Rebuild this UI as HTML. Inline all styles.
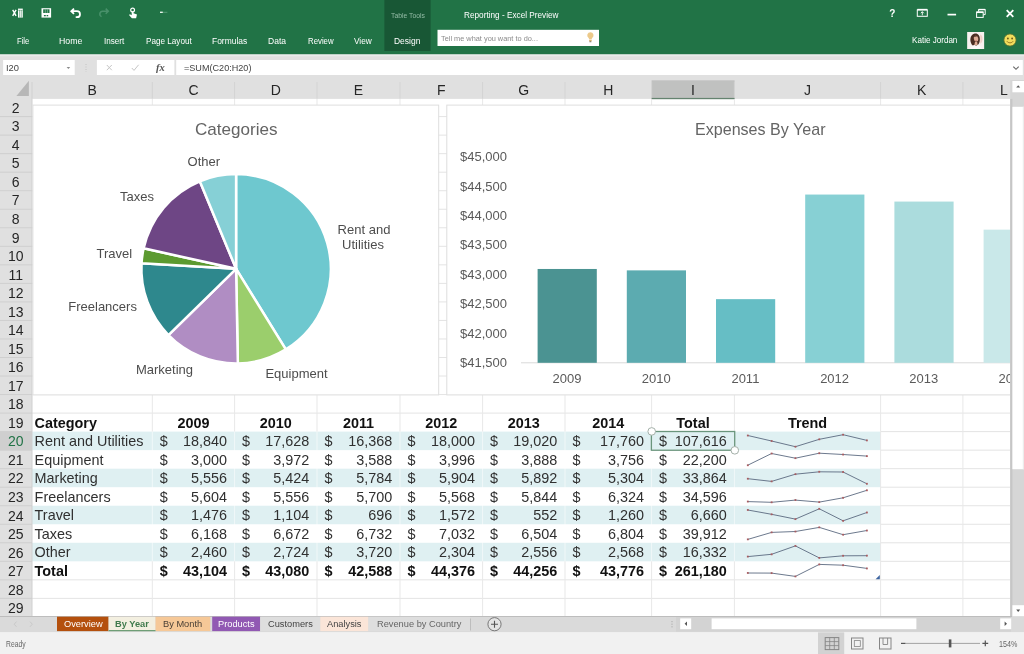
<!DOCTYPE html>
<html lang="en"><head><meta charset="utf-8"><title>Reporting - Excel Preview</title>
<style>
html,body{margin:0;padding:0;background:#fff;width:1024px;height:654px;overflow:hidden;}
body{width:1024px;height:654px;overflow:hidden;position:relative;font-family:"Liberation Sans",sans-serif;}
#app{position:absolute;left:0;top:0;width:1024px;height:654px;overflow:hidden;}
#app div,#app span,#app svg{position:absolute;}
#app>div{left:0;top:0;width:1024px;height:654px;}
#app span{white-space:pre;display:block;}
#app>div{will-change:transform;}
#app svg{overflow:visible;}
</style></head><body><div id="app">
<div id="ribbon">
<svg style="left:0;top:0" width="1024" height="654" viewBox="0 0 1024 654"><rect x="-6.00" y="-6.00" width="1036.00" height="60.60" fill="#217346"/><rect x="384.40" y="-6.00" width="46.20" height="57.00" fill="#185735"/></svg>
<svg style="left:0;top:0" width="200" height="28" viewBox="0 0 200 28">
<g fill="none" stroke="#fff" stroke-width="1.2">
<path d="M12.700 9.800l3.400 6M16.100 9.800l-3.400 6" stroke-width="1.4"/>
<rect x="18" y="8.600" width="4.800" height="9" fill="#fff" stroke="none"/>
<path d="M19.600 10v7.600M21.300 10v7.600" stroke="#217346" stroke-width="0.6" opacity="0.8"/><path d="M18 10.300h4.800" stroke="#217346" stroke-width="0.5" opacity="0.7"/>
<rect x="41.500" y="8.200" width="9.600" height="9.400" fill="#fff" stroke="none"/>
<rect x="43.200" y="9.300" width="6.300" height="3.700" fill="#217346" stroke="none"/>
<path d="M45.300 9.300v3.700M47.400 9.300v3.700" stroke="#9fcdb2" stroke-width="0.6"/>
<rect x="43.900" y="15" width="1.900" height="1.300" fill="#217346" stroke="none"/>
<rect x="46.600" y="15" width="1.600" height="1.300" fill="#217346" stroke="none"/>
<path d="M74 8.600l-2.700 2.600 2.700 2.600M71.600 11.200h5.400a3 3 0 0 1 0 6h-1.300" stroke-width="1.800"/>
<path d="M105.700 8.600l2.600 2.600-2.600 2.600M108 11.200h-5.400a2.800 2.800 0 0 0 -1 5.400" stroke="#48906a" stroke-width="1.500"/>
<circle cx="132.600" cy="10" r="1.900" stroke-width="1.200"/>
<path d="M131.700 11.400v3.800l-1.800-1-.9.900 2.900 3.100h4.200l.9-3.700-3.500-1.200v-1.900z" fill="#fff" stroke="none"/>
<path d="M160 12.300h2.800" stroke-width="1.400" stroke="#e6f3ea"/><path d="M163 12.300h4.400" stroke-width="0.8" stroke="#5fa17d"/>
</g></svg>
<span style="left:16.90px;top:34.76px;font-size:9.6px;line-height:12.48px;color:#fff;transform:scaleX(0.7951);transform-origin:0 50%;">File</span>
<span style="left:58.90px;top:34.76px;font-size:9.6px;line-height:12.48px;color:#fff;transform:scaleX(0.9138);transform-origin:0 50%;">Home</span>
<span style="left:103.90px;top:34.76px;font-size:9.6px;line-height:12.48px;color:#fff;transform:scaleX(0.8455);transform-origin:0 50%;">Insert</span>
<span style="left:145.50px;top:34.76px;font-size:9.6px;line-height:12.48px;color:#fff;transform:scaleX(0.8495);transform-origin:0 50%;">Page Layout</span>
<span style="left:212.30px;top:34.76px;font-size:9.6px;line-height:12.48px;color:#fff;transform:scaleX(0.8798);transform-origin:0 50%;">Formulas</span>
<span style="left:268.40px;top:34.76px;font-size:9.6px;line-height:12.48px;color:#fff;transform:scaleX(0.8876);transform-origin:0 50%;">Data</span>
<span style="left:307.50px;top:34.76px;font-size:9.6px;line-height:12.48px;color:#fff;transform:scaleX(0.8133);transform-origin:0 50%;">Review</span>
<span style="left:354.40px;top:34.76px;font-size:9.6px;line-height:12.48px;color:#fff;transform:scaleX(0.8626);transform-origin:0 50%;">View</span>
<span style="left:394.20px;top:34.76px;font-size:9.6px;line-height:12.48px;color:#fff;transform:scaleX(0.8834);transform-origin:0 50%;">Design</span>
<span style="left:391.00px;top:11.61px;font-size:6.6px;line-height:8.58px;color:#93bba5;transform:scaleX(1.0334);transform-origin:0 50%;">Table Tools</span>
<span style="left:464.20px;top:8.76px;font-size:9.6px;line-height:12.48px;color:#fff;transform:scaleX(0.8565);transform-origin:0 50%;">Reporting - Excel Preview</span>
<svg style="left:0;top:0" width="1024" height="654" viewBox="0 0 1024 654"><rect x="437.50" y="29.80" width="161.50" height="16.20" fill="#fff"/></svg>
<span style="left:441.30px;top:33.53px;font-size:7.8px;line-height:10.14px;color:#8a8a8a;transform:scaleX(0.9440);transform-origin:0 50%;">Tell me what you want to do...</span>
<svg style="left:584px;top:30px" width="14" height="16" viewBox="0 0 14 16">
<path d="M6.4 2.2a3.1 3.1 0 0 0-2 5.5c.5.5.7 1 .7 1.6h2.6c0-.6.2-1.1.7-1.6a3.1 3.1 0 0 0-2-5.5z" fill="#ecc98a"/>
<rect x="5.1" y="9.8" width="2.6" height="1.1" fill="#d8a95c"/><rect x="5.4" y="11.3" width="2" height="0.9" fill="#6b5a3a"/></svg>
<span style="left:889.25px;top:6.80px;font-size:10px;line-height:13.0px;color:#fff;font-weight:bold;">?</span>
<svg style="left:910px;top:4px" width="114" height="20" viewBox="0 0 114 20">
<g fill="none" stroke="#fff" stroke-width="1">
<rect x="7.300" y="5.900" width="10" height="6.400"/><path d="M7.300 5.600h10" stroke-width="1.500"/>
<path d="M12.300 11.300v-3.600M10.800 9.200l1.500-1.500 1.500 1.500" stroke-width="0.9"/>
<path d="M37.5 10.6h8.6" stroke-width="1.7"/>
<rect x="66.6" y="8" width="6.6" height="5.4" /><path d="M66.6 8.3h6.6" stroke-width="1.5"/>
<path d="M68.6 7.6v-2.2h6.6v5.2h-1.8" /><path d="M68.6 5.6h6.6" stroke-width="1.3"/>
<path d="M96.7 6.2l6.6 6.6M103.300 6.2l-6.6 6.6" stroke-width="1.8"/>
</g></svg>
<span style="left:911.70px;top:33.96px;font-size:9.6px;line-height:12.48px;color:#fff;transform:scaleX(0.8422);transform-origin:0 50%;">Katie Jordan</span>
<svg style="left:967px;top:31.7px" width="17.300" height="17" viewBox="0 0 18 18">
<rect width="18" height="18" fill="#f7f1ef"/>
<path d="M13.800 2.500c1.600.6 2.600 2.600 2.400 5.500-.2 2.400-1 3.600-2.200 4.400z" fill="#efcfc6"/>
<path d="M3.900 11.200C2.600 7.300 4 2.400 8 1.700c3.500-.5 5.600 2.200 5.500 6.300-.1 3-1.200 5.400-2.900 6.300H5.900c-1-.8-1.600-1.800-2-3.100z" fill="#4b2e22"/>
<ellipse cx="9.400" cy="7" rx="2.300" ry="3.200" fill="#deae98" transform="rotate(-10 9.400 7)"/>
<path d="M7 5.600c.8-2.300 3.400-2.900 5-1.200-1.700 0-3.300.3-5 1.200z" fill="#4b2e22"/>
<path d="M8.600 9.100c.5.300 1.100.3 1.600 0" stroke="#b5564e" stroke-width="0.600" fill="none"/>
<path d="M8.300 10.600h2.300l.6 3.200H7.600z" fill="#dcaa92"/>
<path d="M3.600 18c.5-2.600 2.200-4 4.400-4.300l1.500 1.300 1.600-1.300c2.400.3 4 1.700 4.500 4.300z" fill="#fbf8f7"/>
</svg>
<svg style="left:1002px;top:31.700px" width="16" height="16" viewBox="0 0 16 16">
<circle cx="8" cy="8" r="6.100" fill="#f1dc5c" stroke="#5d6f2c" stroke-width="0.800"/>
<circle cx="5.900" cy="6.500" r="0.900" fill="#6a5418"/><circle cx="10.100" cy="6.500" r="0.900" fill="#6a5418"/>
<path d="M4.900 9.300c1.500 2 4.700 2 6.200 0" fill="none" stroke="#8a6a1c" stroke-width="0.900"/></svg>
</div>
<div id="formulabar">
<svg style="left:0;top:0" width="1024" height="654" viewBox="0 0 1024 654"><rect x="-6.00" y="54.60" width="1036.00" height="45.40" fill="#e0e0e0"/><rect x="-6.00" y="54.60" width="1036.00" height="1.60" fill="#e9ebea"/><rect x="3.10" y="60.00" width="71.60" height="15.00" fill="#fff"/><rect x="96.90" y="60.00" width="77.50" height="15.00" fill="#fff"/><rect x="176.20" y="60.00" width="846.60" height="15.00" fill="#fff"/></svg>
<span style="left:6.00px;top:61.76px;font-size:9.6px;line-height:12.48px;color:#444;transform:scaleX(0.9741);transform-origin:0 50%;">I20</span>
<span style="left:183.70px;top:61.76px;font-size:9.6px;line-height:12.48px;color:#444;transform:scaleX(0.9477);transform-origin:0 50%;">=SUM(C20:H20)</span>
<svg style="left:60px;top:60px" width="120" height="15" viewBox="0 0 120 15">
<path d="M6.600 7l1.800 1.900L10.200 7z" fill="#8a8a8a"/>
<path d="M26 4v1M26 6.500v1M26 9v1M26 11.500v.5" stroke="#bdbdbd" stroke-width="0.8" stroke-dasharray="1 1"/>
<path d="M46.800 5l5 5.200M51.800 5l-5 5.200" stroke="#c6c6c6" stroke-width="1" fill="none"/>
<path d="M71.800 8l2.200 2.400 4.600-5.600" stroke="#c6c6c6" stroke-width="1" fill="none"/>
</svg>
<span style="left:155.93px;top:60.97px;font-size:10.5px;line-height:13.65px;color:#555;font-weight:bold;font-family:'Liberation Serif',serif;font-style:italic;">fx</span>
<svg style="left:1010px;top:62px" width="12" height="12" viewBox="0 0 12 12"><path d="M3.300 4.600L6 7.300l2.700-2.700" stroke="#666" stroke-width="1.100" fill="none"/></svg>
</div>
<div id="colheads">
<svg style="left:0;top:0" width="1024" height="654" viewBox="0 0 1024 654"><rect x="651.60" y="80.30" width="83.00" height="18.60" fill="#c0c1c0"/></svg>
<svg style="left:0;top:80px" width="32" height="20" viewBox="0 0 32 20"><path d="M28.9 0.8V16H16.4z" fill="#b7b7b7"/></svg>
<span style="left:87.48px;top:81.20px;font-size:14px;line-height:18.2px;color:#262626;">B</span>
<svg style="left:0;top:0" width="1024" height="654" viewBox="0 0 1024 654"><rect x="151.80" y="82.00" width="1.00" height="17.00" fill="#d3d3d3"/></svg>
<span style="left:188.39px;top:81.20px;font-size:14px;line-height:18.2px;color:#262626;">C</span>
<svg style="left:0;top:0" width="1024" height="654" viewBox="0 0 1024 654"><rect x="234.10" y="82.00" width="1.00" height="17.00" fill="#d3d3d3"/></svg>
<span style="left:270.74px;top:81.20px;font-size:14px;line-height:18.2px;color:#262626;">D</span>
<svg style="left:0;top:0" width="1024" height="654" viewBox="0 0 1024 654"><rect x="316.50" y="82.00" width="1.00" height="17.00" fill="#d3d3d3"/></svg>
<span style="left:353.83px;top:81.20px;font-size:14px;line-height:18.2px;color:#262626;">E</span>
<svg style="left:0;top:0" width="1024" height="654" viewBox="0 0 1024 654"><rect x="399.50" y="82.00" width="1.00" height="17.00" fill="#d3d3d3"/></svg>
<span style="left:437.02px;top:81.20px;font-size:14px;line-height:18.2px;color:#262626;">F</span>
<svg style="left:0;top:0" width="1024" height="654" viewBox="0 0 1024 654"><rect x="482.10" y="82.00" width="1.00" height="17.00" fill="#d3d3d3"/></svg>
<span style="left:518.36px;top:81.20px;font-size:14px;line-height:18.2px;color:#262626;">G</span>
<svg style="left:0;top:0" width="1024" height="654" viewBox="0 0 1024 654"><rect x="564.50" y="82.00" width="1.00" height="17.00" fill="#d3d3d3"/></svg>
<span style="left:603.24px;top:81.20px;font-size:14px;line-height:18.2px;color:#262626;">H</span>
<svg style="left:0;top:0" width="1024" height="654" viewBox="0 0 1024 654"><rect x="651.10" y="82.00" width="1.00" height="17.00" fill="#d3d3d3"/></svg>
<span style="left:691.06px;top:81.20px;font-size:14px;line-height:18.2px;color:#262626;">I</span>
<svg style="left:0;top:0" width="1024" height="654" viewBox="0 0 1024 654"><rect x="733.90" y="82.00" width="1.00" height="17.00" fill="#d3d3d3"/></svg>
<span style="left:804.00px;top:81.20px;font-size:14px;line-height:18.2px;color:#262626;">J</span>
<svg style="left:0;top:0" width="1024" height="654" viewBox="0 0 1024 654"><rect x="880.10" y="82.00" width="1.00" height="17.00" fill="#d3d3d3"/></svg>
<span style="left:917.08px;top:81.20px;font-size:14px;line-height:18.2px;color:#262626;">K</span>
<svg style="left:0;top:0" width="1024" height="654" viewBox="0 0 1024 654"><rect x="962.40" y="82.00" width="1.00" height="17.00" fill="#d3d3d3"/></svg>
<span style="left:1000.11px;top:81.20px;font-size:14px;line-height:18.2px;color:#262626;">L</span>
<svg style="left:0;top:0" width="1024" height="654" viewBox="0 0 1024 654"><rect x="31.50" y="82.00" width="1.00" height="17.00" fill="#cfcfcf"/></svg>
</div>
<div id="grid">
<svg style="left:0;top:0" width="1024" height="654" viewBox="0 0 1024 654"><rect x="32.00" y="98.90" width="980.00" height="517.40" fill="#fff"/><rect x="651.60" y="97.90" width="83.00" height="1.30" fill="#64836f"/><rect x="32.00" y="431.61" width="848.60" height="18.53" fill="#dff0f2"/><rect x="32.00" y="468.67" width="848.60" height="18.53" fill="#dff0f2"/><rect x="32.00" y="505.73" width="848.60" height="18.53" fill="#dff0f2"/><rect x="32.00" y="542.79" width="848.60" height="18.53" fill="#dff0f2"/><rect x="32.00" y="116.10" width="980.00" height="1.00" fill="#e4e4e4"/><rect x="32.00" y="134.63" width="980.00" height="1.00" fill="#e4e4e4"/><rect x="32.00" y="153.16" width="980.00" height="1.00" fill="#e4e4e4"/><rect x="32.00" y="171.69" width="980.00" height="1.00" fill="#e4e4e4"/><rect x="32.00" y="190.22" width="980.00" height="1.00" fill="#e4e4e4"/><rect x="32.00" y="208.75" width="980.00" height="1.00" fill="#e4e4e4"/><rect x="32.00" y="227.28" width="980.00" height="1.00" fill="#e4e4e4"/><rect x="32.00" y="245.81" width="980.00" height="1.00" fill="#e4e4e4"/><rect x="32.00" y="264.34" width="980.00" height="1.00" fill="#e4e4e4"/><rect x="32.00" y="282.87" width="980.00" height="1.00" fill="#e4e4e4"/><rect x="32.00" y="301.40" width="980.00" height="1.00" fill="#e4e4e4"/><rect x="32.00" y="319.93" width="980.00" height="1.00" fill="#e4e4e4"/><rect x="32.00" y="338.46" width="980.00" height="1.00" fill="#e4e4e4"/><rect x="32.00" y="356.99" width="980.00" height="1.00" fill="#e4e4e4"/><rect x="32.00" y="375.52" width="980.00" height="1.00" fill="#e4e4e4"/><rect x="32.00" y="394.05" width="980.00" height="1.00" fill="#e4e4e4"/><rect x="32.00" y="412.58" width="980.00" height="1.00" fill="#e4e4e4"/><rect x="880.60" y="431.11" width="131.00" height="1.00" fill="#e4e4e4"/><rect x="880.60" y="449.64" width="131.00" height="1.00" fill="#e4e4e4"/><rect x="880.60" y="468.17" width="131.00" height="1.00" fill="#e4e4e4"/><rect x="880.60" y="486.70" width="131.00" height="1.00" fill="#e4e4e4"/><rect x="880.60" y="505.23" width="131.00" height="1.00" fill="#e4e4e4"/><rect x="880.60" y="523.76" width="131.00" height="1.00" fill="#e4e4e4"/><rect x="880.60" y="542.29" width="131.00" height="1.00" fill="#e4e4e4"/><rect x="880.60" y="560.82" width="131.00" height="1.00" fill="#e4e4e4"/><rect x="32.00" y="579.35" width="980.00" height="1.00" fill="#e4e4e4"/><rect x="32.00" y="597.88" width="980.00" height="1.00" fill="#e4e4e4"/><rect x="32.00" y="616.41" width="980.00" height="1.00" fill="#e4e4e4"/><rect x="151.80" y="98.90" width="1.00" height="332.71" fill="#e8e8e8"/><rect x="151.80" y="431.61" width="1.00" height="129.71" fill="rgba(255,255,255,0.55)"/><rect x="151.80" y="561.32" width="1.00" height="54.98" fill="#e8e8e8"/><rect x="234.10" y="98.90" width="1.00" height="332.71" fill="#e8e8e8"/><rect x="234.10" y="431.61" width="1.00" height="129.71" fill="rgba(255,255,255,0.55)"/><rect x="234.10" y="561.32" width="1.00" height="54.98" fill="#e8e8e8"/><rect x="316.50" y="98.90" width="1.00" height="332.71" fill="#e8e8e8"/><rect x="316.50" y="431.61" width="1.00" height="129.71" fill="rgba(255,255,255,0.55)"/><rect x="316.50" y="561.32" width="1.00" height="54.98" fill="#e8e8e8"/><rect x="399.50" y="98.90" width="1.00" height="332.71" fill="#e8e8e8"/><rect x="399.50" y="431.61" width="1.00" height="129.71" fill="rgba(255,255,255,0.55)"/><rect x="399.50" y="561.32" width="1.00" height="54.98" fill="#e8e8e8"/><rect x="482.10" y="98.90" width="1.00" height="332.71" fill="#e8e8e8"/><rect x="482.10" y="431.61" width="1.00" height="129.71" fill="rgba(255,255,255,0.55)"/><rect x="482.10" y="561.32" width="1.00" height="54.98" fill="#e8e8e8"/><rect x="564.50" y="98.90" width="1.00" height="332.71" fill="#e8e8e8"/><rect x="564.50" y="431.61" width="1.00" height="129.71" fill="rgba(255,255,255,0.55)"/><rect x="564.50" y="561.32" width="1.00" height="54.98" fill="#e8e8e8"/><rect x="651.10" y="98.90" width="1.00" height="332.71" fill="#e8e8e8"/><rect x="651.10" y="431.61" width="1.00" height="129.71" fill="rgba(255,255,255,0.55)"/><rect x="651.10" y="561.32" width="1.00" height="54.98" fill="#e8e8e8"/><rect x="733.90" y="98.90" width="1.00" height="332.71" fill="#e8e8e8"/><rect x="733.90" y="431.61" width="1.00" height="129.71" fill="rgba(255,255,255,0.55)"/><rect x="733.90" y="561.32" width="1.00" height="54.98" fill="#e8e8e8"/><rect x="880.10" y="98.90" width="1.00" height="332.71" fill="#e8e8e8"/><rect x="880.10" y="431.61" width="1.00" height="184.69" fill="#e8e8e8"/><rect x="962.40" y="98.90" width="1.00" height="332.71" fill="#e8e8e8"/><rect x="962.40" y="431.61" width="1.00" height="184.69" fill="#e8e8e8"/></svg>
</div>
<div id="rowheads">
<svg style="left:0;top:0" width="1024" height="654" viewBox="0 0 1024 654"><rect x="-6.00" y="98.90" width="38.00" height="517.40" fill="#e0e0e0"/><rect x="-6.00" y="431.61" width="38.00" height="18.53" fill="#cfcfcf"/><rect x="-6.00" y="116.10" width="38.00" height="1.00" fill="#cfcfcf"/></svg>
<span style="left:11.81px;top:98.83px;font-size:14px;line-height:18.2px;color:#262626;">2</span>
<svg style="left:0;top:0" width="1024" height="654" viewBox="0 0 1024 654"><rect x="-6.00" y="134.63" width="38.00" height="1.00" fill="#cfcfcf"/></svg>
<span style="left:11.81px;top:117.36px;font-size:14px;line-height:18.2px;color:#262626;">3</span>
<svg style="left:0;top:0" width="1024" height="654" viewBox="0 0 1024 654"><rect x="-6.00" y="153.16" width="38.00" height="1.00" fill="#cfcfcf"/></svg>
<span style="left:11.81px;top:135.89px;font-size:14px;line-height:18.2px;color:#262626;">4</span>
<svg style="left:0;top:0" width="1024" height="654" viewBox="0 0 1024 654"><rect x="-6.00" y="171.69" width="38.00" height="1.00" fill="#cfcfcf"/></svg>
<span style="left:11.81px;top:154.43px;font-size:14px;line-height:18.2px;color:#262626;">5</span>
<svg style="left:0;top:0" width="1024" height="654" viewBox="0 0 1024 654"><rect x="-6.00" y="190.22" width="38.00" height="1.00" fill="#cfcfcf"/></svg>
<span style="left:11.81px;top:172.95px;font-size:14px;line-height:18.2px;color:#262626;">6</span>
<svg style="left:0;top:0" width="1024" height="654" viewBox="0 0 1024 654"><rect x="-6.00" y="208.75" width="38.00" height="1.00" fill="#cfcfcf"/></svg>
<span style="left:11.81px;top:191.49px;font-size:14px;line-height:18.2px;color:#262626;">7</span>
<svg style="left:0;top:0" width="1024" height="654" viewBox="0 0 1024 654"><rect x="-6.00" y="227.28" width="38.00" height="1.00" fill="#cfcfcf"/></svg>
<span style="left:11.81px;top:210.01px;font-size:14px;line-height:18.2px;color:#262626;">8</span>
<svg style="left:0;top:0" width="1024" height="654" viewBox="0 0 1024 654"><rect x="-6.00" y="245.81" width="38.00" height="1.00" fill="#cfcfcf"/></svg>
<span style="left:11.81px;top:228.55px;font-size:14px;line-height:18.2px;color:#262626;">9</span>
<svg style="left:0;top:0" width="1024" height="654" viewBox="0 0 1024 654"><rect x="-6.00" y="264.34" width="38.00" height="1.00" fill="#cfcfcf"/></svg>
<span style="left:7.91px;top:247.08px;font-size:14px;line-height:18.2px;color:#262626;">10</span>
<svg style="left:0;top:0" width="1024" height="654" viewBox="0 0 1024 654"><rect x="-6.00" y="282.87" width="38.00" height="1.00" fill="#cfcfcf"/></svg>
<span style="left:8.43px;top:265.61px;font-size:14px;line-height:18.2px;color:#262626;">11</span>
<svg style="left:0;top:0" width="1024" height="654" viewBox="0 0 1024 654"><rect x="-6.00" y="301.40" width="38.00" height="1.00" fill="#cfcfcf"/></svg>
<span style="left:7.91px;top:284.13px;font-size:14px;line-height:18.2px;color:#262626;">12</span>
<svg style="left:0;top:0" width="1024" height="654" viewBox="0 0 1024 654"><rect x="-6.00" y="319.93" width="38.00" height="1.00" fill="#cfcfcf"/></svg>
<span style="left:7.91px;top:302.66px;font-size:14px;line-height:18.2px;color:#262626;">13</span>
<svg style="left:0;top:0" width="1024" height="654" viewBox="0 0 1024 654"><rect x="-6.00" y="338.46" width="38.00" height="1.00" fill="#cfcfcf"/></svg>
<span style="left:7.91px;top:321.19px;font-size:14px;line-height:18.2px;color:#262626;">14</span>
<svg style="left:0;top:0" width="1024" height="654" viewBox="0 0 1024 654"><rect x="-6.00" y="356.99" width="38.00" height="1.00" fill="#cfcfcf"/></svg>
<span style="left:7.91px;top:339.73px;font-size:14px;line-height:18.2px;color:#262626;">15</span>
<svg style="left:0;top:0" width="1024" height="654" viewBox="0 0 1024 654"><rect x="-6.00" y="375.52" width="38.00" height="1.00" fill="#cfcfcf"/></svg>
<span style="left:7.91px;top:358.25px;font-size:14px;line-height:18.2px;color:#262626;">16</span>
<svg style="left:0;top:0" width="1024" height="654" viewBox="0 0 1024 654"><rect x="-6.00" y="394.05" width="38.00" height="1.00" fill="#cfcfcf"/></svg>
<span style="left:7.91px;top:376.79px;font-size:14px;line-height:18.2px;color:#262626;">17</span>
<svg style="left:0;top:0" width="1024" height="654" viewBox="0 0 1024 654"><rect x="-6.00" y="412.58" width="38.00" height="1.00" fill="#cfcfcf"/></svg>
<span style="left:7.91px;top:395.31px;font-size:14px;line-height:18.2px;color:#262626;">18</span>
<svg style="left:0;top:0" width="1024" height="654" viewBox="0 0 1024 654"><rect x="-6.00" y="431.11" width="38.00" height="1.00" fill="#cfcfcf"/></svg>
<span style="left:7.91px;top:413.84px;font-size:14px;line-height:18.2px;color:#262626;">19</span>
<svg style="left:0;top:0" width="1024" height="654" viewBox="0 0 1024 654"><rect x="-6.00" y="449.64" width="38.00" height="1.00" fill="#cfcfcf"/></svg>
<span style="left:7.91px;top:432.38px;font-size:14px;line-height:18.2px;color:#217346;">20</span>
<svg style="left:0;top:0" width="1024" height="654" viewBox="0 0 1024 654"><rect x="-6.00" y="468.17" width="38.00" height="1.00" fill="#cfcfcf"/></svg>
<span style="left:7.91px;top:450.91px;font-size:14px;line-height:18.2px;color:#262626;">21</span>
<svg style="left:0;top:0" width="1024" height="654" viewBox="0 0 1024 654"><rect x="-6.00" y="486.70" width="38.00" height="1.00" fill="#cfcfcf"/></svg>
<span style="left:7.91px;top:469.44px;font-size:14px;line-height:18.2px;color:#262626;">22</span>
<svg style="left:0;top:0" width="1024" height="654" viewBox="0 0 1024 654"><rect x="-6.00" y="505.23" width="38.00" height="1.00" fill="#cfcfcf"/></svg>
<span style="left:7.91px;top:487.96px;font-size:14px;line-height:18.2px;color:#262626;">23</span>
<svg style="left:0;top:0" width="1024" height="654" viewBox="0 0 1024 654"><rect x="-6.00" y="523.76" width="38.00" height="1.00" fill="#cfcfcf"/></svg>
<span style="left:7.91px;top:506.50px;font-size:14px;line-height:18.2px;color:#262626;">24</span>
<svg style="left:0;top:0" width="1024" height="654" viewBox="0 0 1024 654"><rect x="-6.00" y="542.29" width="38.00" height="1.00" fill="#cfcfcf"/></svg>
<span style="left:7.91px;top:525.02px;font-size:14px;line-height:18.2px;color:#262626;">25</span>
<svg style="left:0;top:0" width="1024" height="654" viewBox="0 0 1024 654"><rect x="-6.00" y="560.82" width="38.00" height="1.00" fill="#cfcfcf"/></svg>
<span style="left:7.91px;top:543.55px;font-size:14px;line-height:18.2px;color:#262626;">26</span>
<svg style="left:0;top:0" width="1024" height="654" viewBox="0 0 1024 654"><rect x="-6.00" y="579.35" width="38.00" height="1.00" fill="#cfcfcf"/></svg>
<span style="left:7.91px;top:562.08px;font-size:14px;line-height:18.2px;color:#262626;">27</span>
<svg style="left:0;top:0" width="1024" height="654" viewBox="0 0 1024 654"><rect x="-6.00" y="597.88" width="38.00" height="1.00" fill="#cfcfcf"/></svg>
<span style="left:7.91px;top:580.62px;font-size:14px;line-height:18.2px;color:#262626;">28</span>
<svg style="left:0;top:0" width="1024" height="654" viewBox="0 0 1024 654"><rect x="-6.00" y="616.41" width="38.00" height="1.00" fill="#cfcfcf"/></svg>
<span style="left:7.91px;top:599.15px;font-size:14px;line-height:18.2px;color:#262626;">29</span>
<svg style="left:0;top:0" width="1024" height="654" viewBox="0 0 1024 654"><rect x="31.50" y="98.90" width="1.00" height="517.40" fill="#cfcfcf"/></svg>
</div>
<div id="table">
<span style="left:34.60px;top:413.78px;font-size:14.4px;line-height:18.72px;color:#111;font-weight:bold;">Category</span>
<span style="left:177.43px;top:413.78px;font-size:14.4px;line-height:18.72px;color:#111;font-weight:bold;">2009</span>
<span style="left:259.78px;top:413.78px;font-size:14.4px;line-height:18.72px;color:#111;font-weight:bold;">2010</span>
<span style="left:342.88px;top:413.78px;font-size:14.4px;line-height:18.72px;color:#111;font-weight:bold;">2011</span>
<span style="left:425.28px;top:413.78px;font-size:14.4px;line-height:18.72px;color:#111;font-weight:bold;">2012</span>
<span style="left:507.78px;top:413.78px;font-size:14.4px;line-height:18.72px;color:#111;font-weight:bold;">2013</span>
<span style="left:592.28px;top:413.78px;font-size:14.4px;line-height:18.72px;color:#111;font-weight:bold;">2014</span>
<span style="left:676.34px;top:413.78px;font-size:14.4px;line-height:18.72px;color:#111;font-weight:bold;">Total</span>
<span style="left:787.90px;top:413.78px;font-size:14.4px;line-height:18.72px;color:#111;font-weight:bold;">Trend</span>
<span style="left:34.60px;top:432.31px;font-size:14.4px;line-height:18.72px;color:#303030;">Rent and Utilities</span>
<span style="left:159.70px;top:432.31px;font-size:14.4px;line-height:18.72px;color:#303030;">$</span>
<span style="left:182.96px;top:432.31px;font-size:14.4px;line-height:18.72px;color:#303030;">18,840</span>
<span style="left:242.00px;top:432.31px;font-size:14.4px;line-height:18.72px;color:#303030;">$</span>
<span style="left:265.36px;top:432.31px;font-size:14.4px;line-height:18.72px;color:#303030;">17,628</span>
<span style="left:324.40px;top:432.31px;font-size:14.4px;line-height:18.72px;color:#303030;">$</span>
<span style="left:348.36px;top:432.31px;font-size:14.4px;line-height:18.72px;color:#303030;">16,368</span>
<span style="left:407.40px;top:432.31px;font-size:14.4px;line-height:18.72px;color:#303030;">$</span>
<span style="left:430.96px;top:432.31px;font-size:14.4px;line-height:18.72px;color:#303030;">18,000</span>
<span style="left:490.00px;top:432.31px;font-size:14.4px;line-height:18.72px;color:#303030;">$</span>
<span style="left:513.36px;top:432.31px;font-size:14.4px;line-height:18.72px;color:#303030;">19,020</span>
<span style="left:572.40px;top:432.31px;font-size:14.4px;line-height:18.72px;color:#303030;">$</span>
<span style="left:599.96px;top:432.31px;font-size:14.4px;line-height:18.72px;color:#303030;">17,760</span>
<span style="left:659.00px;top:432.31px;font-size:14.4px;line-height:18.72px;color:#303030;">$</span>
<span style="left:674.75px;top:432.31px;font-size:14.4px;line-height:18.72px;color:#303030;">107,616</span>
<span style="left:34.60px;top:450.85px;font-size:14.4px;line-height:18.72px;color:#303030;">Equipment</span>
<span style="left:159.70px;top:450.85px;font-size:14.4px;line-height:18.72px;color:#303030;">$</span>
<span style="left:190.96px;top:450.85px;font-size:14.4px;line-height:18.72px;color:#303030;">3,000</span>
<span style="left:242.00px;top:450.85px;font-size:14.4px;line-height:18.72px;color:#303030;">$</span>
<span style="left:273.36px;top:450.85px;font-size:14.4px;line-height:18.72px;color:#303030;">3,972</span>
<span style="left:324.40px;top:450.85px;font-size:14.4px;line-height:18.72px;color:#303030;">$</span>
<span style="left:356.36px;top:450.85px;font-size:14.4px;line-height:18.72px;color:#303030;">3,588</span>
<span style="left:407.40px;top:450.85px;font-size:14.4px;line-height:18.72px;color:#303030;">$</span>
<span style="left:438.96px;top:450.85px;font-size:14.4px;line-height:18.72px;color:#303030;">3,996</span>
<span style="left:490.00px;top:450.85px;font-size:14.4px;line-height:18.72px;color:#303030;">$</span>
<span style="left:521.36px;top:450.85px;font-size:14.4px;line-height:18.72px;color:#303030;">3,888</span>
<span style="left:572.40px;top:450.85px;font-size:14.4px;line-height:18.72px;color:#303030;">$</span>
<span style="left:607.96px;top:450.85px;font-size:14.4px;line-height:18.72px;color:#303030;">3,756</span>
<span style="left:659.00px;top:450.85px;font-size:14.4px;line-height:18.72px;color:#303030;">$</span>
<span style="left:682.76px;top:450.85px;font-size:14.4px;line-height:18.72px;color:#303030;">22,200</span>
<span style="left:34.60px;top:469.38px;font-size:14.4px;line-height:18.72px;color:#303030;">Marketing</span>
<span style="left:159.70px;top:469.38px;font-size:14.4px;line-height:18.72px;color:#303030;">$</span>
<span style="left:190.96px;top:469.38px;font-size:14.4px;line-height:18.72px;color:#303030;">5,556</span>
<span style="left:242.00px;top:469.38px;font-size:14.4px;line-height:18.72px;color:#303030;">$</span>
<span style="left:273.36px;top:469.38px;font-size:14.4px;line-height:18.72px;color:#303030;">5,424</span>
<span style="left:324.40px;top:469.38px;font-size:14.4px;line-height:18.72px;color:#303030;">$</span>
<span style="left:356.36px;top:469.38px;font-size:14.4px;line-height:18.72px;color:#303030;">5,784</span>
<span style="left:407.40px;top:469.38px;font-size:14.4px;line-height:18.72px;color:#303030;">$</span>
<span style="left:438.96px;top:469.38px;font-size:14.4px;line-height:18.72px;color:#303030;">5,904</span>
<span style="left:490.00px;top:469.38px;font-size:14.4px;line-height:18.72px;color:#303030;">$</span>
<span style="left:521.36px;top:469.38px;font-size:14.4px;line-height:18.72px;color:#303030;">5,892</span>
<span style="left:572.40px;top:469.38px;font-size:14.4px;line-height:18.72px;color:#303030;">$</span>
<span style="left:607.96px;top:469.38px;font-size:14.4px;line-height:18.72px;color:#303030;">5,304</span>
<span style="left:659.00px;top:469.38px;font-size:14.4px;line-height:18.72px;color:#303030;">$</span>
<span style="left:682.76px;top:469.38px;font-size:14.4px;line-height:18.72px;color:#303030;">33,864</span>
<span style="left:34.60px;top:487.90px;font-size:14.4px;line-height:18.72px;color:#303030;">Freelancers</span>
<span style="left:159.70px;top:487.90px;font-size:14.4px;line-height:18.72px;color:#303030;">$</span>
<span style="left:190.96px;top:487.90px;font-size:14.4px;line-height:18.72px;color:#303030;">5,604</span>
<span style="left:242.00px;top:487.90px;font-size:14.4px;line-height:18.72px;color:#303030;">$</span>
<span style="left:273.36px;top:487.90px;font-size:14.4px;line-height:18.72px;color:#303030;">5,556</span>
<span style="left:324.40px;top:487.90px;font-size:14.4px;line-height:18.72px;color:#303030;">$</span>
<span style="left:356.36px;top:487.90px;font-size:14.4px;line-height:18.72px;color:#303030;">5,700</span>
<span style="left:407.40px;top:487.90px;font-size:14.4px;line-height:18.72px;color:#303030;">$</span>
<span style="left:438.96px;top:487.90px;font-size:14.4px;line-height:18.72px;color:#303030;">5,568</span>
<span style="left:490.00px;top:487.90px;font-size:14.4px;line-height:18.72px;color:#303030;">$</span>
<span style="left:521.36px;top:487.90px;font-size:14.4px;line-height:18.72px;color:#303030;">5,844</span>
<span style="left:572.40px;top:487.90px;font-size:14.4px;line-height:18.72px;color:#303030;">$</span>
<span style="left:607.96px;top:487.90px;font-size:14.4px;line-height:18.72px;color:#303030;">6,324</span>
<span style="left:659.00px;top:487.90px;font-size:14.4px;line-height:18.72px;color:#303030;">$</span>
<span style="left:682.76px;top:487.90px;font-size:14.4px;line-height:18.72px;color:#303030;">34,596</span>
<span style="left:34.60px;top:506.43px;font-size:14.4px;line-height:18.72px;color:#303030;">Travel</span>
<span style="left:159.70px;top:506.43px;font-size:14.4px;line-height:18.72px;color:#303030;">$</span>
<span style="left:190.96px;top:506.43px;font-size:14.4px;line-height:18.72px;color:#303030;">1,476</span>
<span style="left:242.00px;top:506.43px;font-size:14.4px;line-height:18.72px;color:#303030;">$</span>
<span style="left:273.36px;top:506.43px;font-size:14.4px;line-height:18.72px;color:#303030;">1,104</span>
<span style="left:324.40px;top:506.43px;font-size:14.4px;line-height:18.72px;color:#303030;">$</span>
<span style="left:368.37px;top:506.43px;font-size:14.4px;line-height:18.72px;color:#303030;">696</span>
<span style="left:407.40px;top:506.43px;font-size:14.4px;line-height:18.72px;color:#303030;">$</span>
<span style="left:438.96px;top:506.43px;font-size:14.4px;line-height:18.72px;color:#303030;">1,572</span>
<span style="left:490.00px;top:506.43px;font-size:14.4px;line-height:18.72px;color:#303030;">$</span>
<span style="left:533.37px;top:506.43px;font-size:14.4px;line-height:18.72px;color:#303030;">552</span>
<span style="left:572.40px;top:506.43px;font-size:14.4px;line-height:18.72px;color:#303030;">$</span>
<span style="left:607.96px;top:506.43px;font-size:14.4px;line-height:18.72px;color:#303030;">1,260</span>
<span style="left:659.00px;top:506.43px;font-size:14.4px;line-height:18.72px;color:#303030;">$</span>
<span style="left:690.76px;top:506.43px;font-size:14.4px;line-height:18.72px;color:#303030;">6,660</span>
<span style="left:34.60px;top:524.96px;font-size:14.4px;line-height:18.72px;color:#303030;">Taxes</span>
<span style="left:159.70px;top:524.96px;font-size:14.4px;line-height:18.72px;color:#303030;">$</span>
<span style="left:190.96px;top:524.96px;font-size:14.4px;line-height:18.72px;color:#303030;">6,168</span>
<span style="left:242.00px;top:524.96px;font-size:14.4px;line-height:18.72px;color:#303030;">$</span>
<span style="left:273.36px;top:524.96px;font-size:14.4px;line-height:18.72px;color:#303030;">6,672</span>
<span style="left:324.40px;top:524.96px;font-size:14.4px;line-height:18.72px;color:#303030;">$</span>
<span style="left:356.36px;top:524.96px;font-size:14.4px;line-height:18.72px;color:#303030;">6,732</span>
<span style="left:407.40px;top:524.96px;font-size:14.4px;line-height:18.72px;color:#303030;">$</span>
<span style="left:438.96px;top:524.96px;font-size:14.4px;line-height:18.72px;color:#303030;">7,032</span>
<span style="left:490.00px;top:524.96px;font-size:14.4px;line-height:18.72px;color:#303030;">$</span>
<span style="left:521.36px;top:524.96px;font-size:14.4px;line-height:18.72px;color:#303030;">6,504</span>
<span style="left:572.40px;top:524.96px;font-size:14.4px;line-height:18.72px;color:#303030;">$</span>
<span style="left:607.96px;top:524.96px;font-size:14.4px;line-height:18.72px;color:#303030;">6,804</span>
<span style="left:659.00px;top:524.96px;font-size:14.4px;line-height:18.72px;color:#303030;">$</span>
<span style="left:682.76px;top:524.96px;font-size:14.4px;line-height:18.72px;color:#303030;">39,912</span>
<span style="left:34.60px;top:543.49px;font-size:14.4px;line-height:18.72px;color:#303030;">Other</span>
<span style="left:159.70px;top:543.49px;font-size:14.4px;line-height:18.72px;color:#303030;">$</span>
<span style="left:190.96px;top:543.49px;font-size:14.4px;line-height:18.72px;color:#303030;">2,460</span>
<span style="left:242.00px;top:543.49px;font-size:14.4px;line-height:18.72px;color:#303030;">$</span>
<span style="left:273.36px;top:543.49px;font-size:14.4px;line-height:18.72px;color:#303030;">2,724</span>
<span style="left:324.40px;top:543.49px;font-size:14.4px;line-height:18.72px;color:#303030;">$</span>
<span style="left:356.36px;top:543.49px;font-size:14.4px;line-height:18.72px;color:#303030;">3,720</span>
<span style="left:407.40px;top:543.49px;font-size:14.4px;line-height:18.72px;color:#303030;">$</span>
<span style="left:438.96px;top:543.49px;font-size:14.4px;line-height:18.72px;color:#303030;">2,304</span>
<span style="left:490.00px;top:543.49px;font-size:14.4px;line-height:18.72px;color:#303030;">$</span>
<span style="left:521.36px;top:543.49px;font-size:14.4px;line-height:18.72px;color:#303030;">2,556</span>
<span style="left:572.40px;top:543.49px;font-size:14.4px;line-height:18.72px;color:#303030;">$</span>
<span style="left:607.96px;top:543.49px;font-size:14.4px;line-height:18.72px;color:#303030;">2,568</span>
<span style="left:659.00px;top:543.49px;font-size:14.4px;line-height:18.72px;color:#303030;">$</span>
<span style="left:682.76px;top:543.49px;font-size:14.4px;line-height:18.72px;color:#303030;">16,332</span>
<span style="left:34.60px;top:562.02px;font-size:14.4px;line-height:18.72px;color:#111;font-weight:bold;">Total</span>
<span style="left:159.70px;top:562.02px;font-size:14.4px;line-height:18.72px;color:#111;font-weight:bold;">$</span>
<span style="left:182.96px;top:562.02px;font-size:14.4px;line-height:18.72px;color:#111;font-weight:bold;">43,104</span>
<span style="left:242.00px;top:562.02px;font-size:14.4px;line-height:18.72px;color:#111;font-weight:bold;">$</span>
<span style="left:265.36px;top:562.02px;font-size:14.4px;line-height:18.72px;color:#111;font-weight:bold;">43,080</span>
<span style="left:324.40px;top:562.02px;font-size:14.4px;line-height:18.72px;color:#111;font-weight:bold;">$</span>
<span style="left:348.36px;top:562.02px;font-size:14.4px;line-height:18.72px;color:#111;font-weight:bold;">42,588</span>
<span style="left:407.40px;top:562.02px;font-size:14.4px;line-height:18.72px;color:#111;font-weight:bold;">$</span>
<span style="left:430.96px;top:562.02px;font-size:14.4px;line-height:18.72px;color:#111;font-weight:bold;">44,376</span>
<span style="left:490.00px;top:562.02px;font-size:14.4px;line-height:18.72px;color:#111;font-weight:bold;">$</span>
<span style="left:513.36px;top:562.02px;font-size:14.4px;line-height:18.72px;color:#111;font-weight:bold;">44,256</span>
<span style="left:572.40px;top:562.02px;font-size:14.4px;line-height:18.72px;color:#111;font-weight:bold;">$</span>
<span style="left:599.96px;top:562.02px;font-size:14.4px;line-height:18.72px;color:#111;font-weight:bold;">43,776</span>
<span style="left:659.00px;top:562.02px;font-size:14.4px;line-height:18.72px;color:#111;font-weight:bold;">$</span>
<span style="left:674.75px;top:562.02px;font-size:14.4px;line-height:18.72px;color:#111;font-weight:bold;">261,180</span>
<svg style="left:0;top:0" width="1024" height="654" viewBox="0 0 1024 654"><polyline fill="none" stroke="#5b6a80" stroke-width="0.9" points="747.8,435.5 771.6,441.0 795.4,446.7 819.3,439.3 843.1,434.7 866.9,440.4"/><rect x="746.90" y="434.62" width="1.8" height="1.8" fill="#a85c60"/><rect x="770.72" y="440.11" width="1.8" height="1.8" fill="#a85c60"/><rect x="794.54" y="445.81" width="1.8" height="1.8" fill="#a85c60"/><rect x="818.36" y="438.43" width="1.8" height="1.8" fill="#a85c60"/><rect x="842.18" y="433.81" width="1.8" height="1.8" fill="#a85c60"/><rect x="866.00" y="439.51" width="1.8" height="1.8" fill="#a85c60"/><polyline fill="none" stroke="#5b6a80" stroke-width="0.9" points="747.8,465.2 771.6,453.5 795.4,458.2 819.3,453.2 843.1,454.5 866.9,456.1"/><rect x="746.90" y="464.34" width="1.8" height="1.8" fill="#a85c60"/><rect x="770.72" y="452.63" width="1.8" height="1.8" fill="#a85c60"/><rect x="794.54" y="457.26" width="1.8" height="1.8" fill="#a85c60"/><rect x="818.36" y="452.34" width="1.8" height="1.8" fill="#a85c60"/><rect x="842.18" y="453.64" width="1.8" height="1.8" fill="#a85c60"/><rect x="866.00" y="455.23" width="1.8" height="1.8" fill="#a85c60"/><polyline fill="none" stroke="#5b6a80" stroke-width="0.9" points="747.8,478.7 771.6,481.4 795.4,474.2 819.3,471.8 843.1,472.0 866.9,483.8"/><rect x="746.90" y="477.83" width="1.8" height="1.8" fill="#a85c60"/><rect x="770.72" y="480.47" width="1.8" height="1.8" fill="#a85c60"/><rect x="794.54" y="473.27" width="1.8" height="1.8" fill="#a85c60"/><rect x="818.36" y="470.87" width="1.8" height="1.8" fill="#a85c60"/><rect x="842.18" y="471.11" width="1.8" height="1.8" fill="#a85c60"/><rect x="866.00" y="482.87" width="1.8" height="1.8" fill="#a85c60"/><polyline fill="none" stroke="#5b6a80" stroke-width="0.9" points="747.8,501.6 771.6,502.3 795.4,500.1 819.3,502.1 843.1,497.8 866.9,490.3"/><rect x="746.90" y="500.65" width="1.8" height="1.8" fill="#a85c60"/><rect x="770.72" y="501.40" width="1.8" height="1.8" fill="#a85c60"/><rect x="794.54" y="499.15" width="1.8" height="1.8" fill="#a85c60"/><rect x="818.36" y="501.21" width="1.8" height="1.8" fill="#a85c60"/><rect x="842.18" y="496.90" width="1.8" height="1.8" fill="#a85c60"/><rect x="866.00" y="489.40" width="1.8" height="1.8" fill="#a85c60"/><polyline fill="none" stroke="#5b6a80" stroke-width="0.9" points="747.8,510.0 771.6,514.3 795.4,519.1 819.3,508.8 843.1,520.8 866.9,512.5"/><rect x="746.90" y="509.06" width="1.8" height="1.8" fill="#a85c60"/><rect x="770.72" y="513.44" width="1.8" height="1.8" fill="#a85c60"/><rect x="794.54" y="518.24" width="1.8" height="1.8" fill="#a85c60"/><rect x="818.36" y="507.93" width="1.8" height="1.8" fill="#a85c60"/><rect x="842.18" y="519.93" width="1.8" height="1.8" fill="#a85c60"/><rect x="866.00" y="511.60" width="1.8" height="1.8" fill="#a85c60"/><polyline fill="none" stroke="#5b6a80" stroke-width="0.9" points="747.8,539.4 771.6,532.4 795.4,531.5 819.3,527.4 843.1,534.7 866.9,530.5"/><rect x="746.90" y="538.46" width="1.8" height="1.8" fill="#a85c60"/><rect x="770.72" y="531.46" width="1.8" height="1.8" fill="#a85c60"/><rect x="794.54" y="530.63" width="1.8" height="1.8" fill="#a85c60"/><rect x="818.36" y="526.46" width="1.8" height="1.8" fill="#a85c60"/><rect x="842.18" y="533.79" width="1.8" height="1.8" fill="#a85c60"/><rect x="866.00" y="529.63" width="1.8" height="1.8" fill="#a85c60"/><polyline fill="none" stroke="#5b6a80" stroke-width="0.9" points="747.8,556.6 771.6,554.3 795.4,545.9 819.3,557.9 843.1,555.8 866.9,555.7"/><rect x="746.90" y="555.67" width="1.8" height="1.8" fill="#a85c60"/><rect x="770.72" y="553.43" width="1.8" height="1.8" fill="#a85c60"/><rect x="794.54" y="544.99" width="1.8" height="1.8" fill="#a85c60"/><rect x="818.36" y="556.99" width="1.8" height="1.8" fill="#a85c60"/><rect x="842.18" y="554.85" width="1.8" height="1.8" fill="#a85c60"/><rect x="866.00" y="554.75" width="1.8" height="1.8" fill="#a85c60"/><polyline fill="none" stroke="#5b6a80" stroke-width="0.9" points="747.8,573.0 771.6,573.1 795.4,576.4 819.3,564.4 843.1,565.2 866.9,568.4"/><rect x="746.90" y="572.06" width="1.8" height="1.8" fill="#a85c60"/><rect x="770.72" y="572.22" width="1.8" height="1.8" fill="#a85c60"/><rect x="794.54" y="575.52" width="1.8" height="1.8" fill="#a85c60"/><rect x="818.36" y="563.52" width="1.8" height="1.8" fill="#a85c60"/><rect x="842.18" y="564.33" width="1.8" height="1.8" fill="#a85c60"/><rect x="866.00" y="567.55" width="1.8" height="1.8" fill="#a85c60"/><path d="M879.8 579.2h-4.200l4.200-4.200z" fill="#3d64a0"/></svg>
<svg style="left:0;top:0" width="1024" height="654" viewBox="0 0 1024 654"><rect x="651.40" y="431.51" width="83.30" height="18.73" fill="none" stroke="#6a957c" stroke-width="1.3"/><circle cx="651.70" cy="431.41" r="3.8" fill="#fff" stroke="#a3afa8" stroke-width="1"/><circle cx="734.80" cy="450.34" r="3.8" fill="#fff" stroke="#a3afa8" stroke-width="1"/></svg>
</div>
<div id="charts">
<svg style="left:0;top:0" width="1024" height="654" viewBox="0 0 1024 654"><rect x="32.90" y="105.10" width="405.80" height="289.80" fill="#fff" stroke="#dedede" stroke-width="1"/><rect x="446.80" y="105.10" width="600.00" height="289.80" fill="#fff" stroke="#dedede" stroke-width="1"/></svg>
<svg style="left:0;top:0" width="1024" height="654" viewBox="0 0 1024 654"><path d="M236.10 268.80L236.10 174.10A94.7 94.7 0 0 1 285.81 349.40Z" fill="#6ec8cf" stroke="#fff" stroke-width="2.5" stroke-linejoin="round"/><path d="M236.10 268.80L285.81 349.40A94.7 94.7 0 0 1 237.86 363.48Z" fill="#9bce6c" stroke="#fff" stroke-width="2.5" stroke-linejoin="round"/><path d="M236.10 268.80L237.86 363.48A94.7 94.7 0 0 1 168.43 335.05Z" fill="#b08dc3" stroke="#fff" stroke-width="2.5" stroke-linejoin="round"/><path d="M236.10 268.80L168.43 335.05A94.7 94.7 0 0 1 141.56 263.36Z" fill="#2e888d" stroke="#fff" stroke-width="2.5" stroke-linejoin="round"/><path d="M236.10 268.80L141.56 263.36A94.7 94.7 0 0 1 143.64 248.34Z" fill="#5c9a30" stroke="#fff" stroke-width="2.5" stroke-linejoin="round"/><path d="M236.10 268.80L143.64 248.34A94.7 94.7 0 0 1 199.84 181.32Z" fill="#6e4685" stroke="#fff" stroke-width="2.5" stroke-linejoin="round"/><path d="M236.10 268.80L199.84 181.32A94.7 94.7 0 0 1 236.10 174.10Z" fill="#86d0d6" stroke="#fff" stroke-width="2.5" stroke-linejoin="round"/><path d="M521 362.8H1012" stroke="#d9d9d9" stroke-width="1"/><rect x="537.60" y="268.97" width="59.2" height="93.83" fill="#4b9392"/><rect x="626.80" y="270.37" width="59.2" height="92.43" fill="#5cabb0"/><rect x="716.00" y="299.15" width="59.2" height="63.65" fill="#66bec5"/><rect x="805.20" y="194.55" width="59.2" height="168.25" fill="#87d0d4"/><rect x="894.40" y="201.57" width="59.2" height="161.23" fill="#abdcdd"/><rect x="983.60" y="229.65" width="59.2" height="133.15" fill="#c9e8e9"/></svg>
<span style="left:194.75px;top:118.95px;font-size:17px;line-height:22.1px;color:#646464;transform:scaleX(1.0035);transform-origin:0 50%;">Categories</span>
<span style="left:695.25px;top:118.95px;font-size:17px;line-height:22.1px;color:#646464;transform:scaleX(0.9457);transform-origin:0 50%;">Expenses By Year</span>
<span style="left:187.54px;top:154.35px;font-size:13px;line-height:16.9px;color:#4d4d4d;">Other</span>
<span style="left:120.02px;top:189.45px;font-size:13px;line-height:16.9px;color:#4d4d4d;">Taxes</span>
<span style="left:96.48px;top:245.75px;font-size:13px;line-height:16.9px;color:#4d4d4d;">Travel</span>
<span style="left:68.28px;top:299.35px;font-size:13px;line-height:16.9px;color:#4d4d4d;">Freelancers</span>
<span style="left:135.96px;top:362.35px;font-size:13px;line-height:16.9px;color:#4d4d4d;">Marketing</span>
<span style="left:265.42px;top:365.75px;font-size:13px;line-height:16.9px;color:#4d4d4d;">Equipment</span>
<span style="left:337.62px;top:221.75px;font-size:13px;line-height:16.9px;color:#4d4d4d;">Rent and</span>
<span style="left:342.05px;top:236.95px;font-size:13px;line-height:16.9px;color:#4d4d4d;">Utilities</span>
<span style="left:460.00px;top:149.15px;font-size:13px;line-height:16.9px;color:#5a5a5a;">$45,000</span>
<span style="left:460.00px;top:178.55px;font-size:13px;line-height:16.9px;color:#5a5a5a;">$44,500</span>
<span style="left:460.00px;top:207.95px;font-size:13px;line-height:16.9px;color:#5a5a5a;">$44,000</span>
<span style="left:460.00px;top:237.35px;font-size:13px;line-height:16.9px;color:#5a5a5a;">$43,500</span>
<span style="left:460.00px;top:266.75px;font-size:13px;line-height:16.9px;color:#5a5a5a;">$43,000</span>
<span style="left:460.00px;top:296.15px;font-size:13px;line-height:16.9px;color:#5a5a5a;">$42,500</span>
<span style="left:460.00px;top:325.55px;font-size:13px;line-height:16.9px;color:#5a5a5a;">$42,000</span>
<span style="left:460.00px;top:354.95px;font-size:13px;line-height:16.9px;color:#5a5a5a;">$41,500</span>
<span style="left:552.54px;top:371.15px;font-size:13px;line-height:16.9px;color:#5a5a5a;">2009</span>
<span style="left:641.74px;top:371.15px;font-size:13px;line-height:16.9px;color:#5a5a5a;">2010</span>
<span style="left:731.42px;top:371.15px;font-size:13px;line-height:16.9px;color:#5a5a5a;">2011</span>
<span style="left:820.14px;top:371.15px;font-size:13px;line-height:16.9px;color:#5a5a5a;">2012</span>
<span style="left:909.34px;top:371.15px;font-size:13px;line-height:16.9px;color:#5a5a5a;">2013</span>
<span style="left:998.54px;top:371.15px;font-size:13px;line-height:16.9px;color:#5a5a5a;">2014</span>
</div>
<div id="vscroll">
<svg style="left:0;top:0" width="1024" height="654" viewBox="0 0 1024 654"><rect x="1010.20" y="80.00" width="19.80" height="537.00" fill="#d6d6d6"/><rect x="1010.20" y="98.90" width="2.20" height="518.00" fill="#c6c6c6"/><rect x="1012.40" y="81.00" width="17.60" height="11.30" fill="#fff"/><rect x="1012.40" y="106.80" width="11.60" height="362.40" fill="#fff"/><rect x="1022.80" y="106.80" width="7.20" height="362.40" fill="#ececec"/><rect x="1012.40" y="605.20" width="17.60" height="11.30" fill="#fff"/></svg>
<svg style="left:1012px;top:80px" width="12" height="540" viewBox="0 0 12 540">
<path d="M4.200 7.600l2-2.400 2 2.400z" fill="#555"/><path d="M4.200 529.600l2 2.400 2-2.400z" fill="#555"/></svg>
</div>
<div id="sheettabs">
<svg style="left:0;top:0" width="1024" height="654" viewBox="0 0 1024 654"><rect x="-6.00" y="616.30" width="1036.00" height="16.20" fill="#dadada"/><rect x="0.00" y="616.00" width="1012.00" height="1.00" fill="#bdbdbd"/><rect x="57.00" y="616.70" width="51.60" height="14.40" fill="#b4500d"/></svg>
<span style="left:63.50px;top:617.76px;font-size:9.6px;line-height:12.48px;color:#fff;transform:scaleX(0.9650);transform-origin:0 50%;">Overview</span>
<svg style="left:0;top:0" width="1024" height="654" viewBox="0 0 1024 654"><rect x="108.60" y="616.70" width="46.90" height="14.40" fill="#f3efe0"/></svg>
<span style="left:115.14px;top:617.76px;font-size:9.6px;line-height:12.48px;color:#3f7a4c;font-weight:bold;transform:scaleX(0.9650);transform-origin:0 50%;">By Year</span>
<svg style="left:0;top:0" width="1024" height="654" viewBox="0 0 1024 654"><rect x="155.50" y="616.70" width="54.70" height="14.40" fill="#f6c897"/></svg>
<span style="left:163.28px;top:617.76px;font-size:9.6px;line-height:12.48px;color:#4a4036;transform:scaleX(0.9650);transform-origin:0 50%;">By Month</span>
<svg style="left:0;top:0" width="1024" height="654" viewBox="0 0 1024 654"><rect x="212.20" y="616.70" width="48.00" height="14.40" fill="#9159b3"/></svg>
<span style="left:217.92px;top:617.76px;font-size:9.6px;line-height:12.48px;color:#fff;transform:scaleX(0.9650);transform-origin:0 50%;">Products</span>
<svg style="left:0;top:0" width="1024" height="654" viewBox="0 0 1024 654"><rect x="260.20" y="616.70" width="60.10" height="14.40" fill="#dedede"/></svg>
<span style="left:267.86px;top:617.76px;font-size:9.6px;line-height:12.48px;color:#444;transform:scaleX(0.9650);transform-origin:0 50%;">Customers</span>
<svg style="left:0;top:0" width="1024" height="654" viewBox="0 0 1024 654"><rect x="320.30" y="616.70" width="48.10" height="14.40" fill="#fbe5d8"/></svg>
<span style="left:327.10px;top:617.76px;font-size:9.6px;line-height:12.48px;color:#444;transform:scaleX(0.9650);transform-origin:0 50%;">Analysis</span>
<svg style="left:0;top:0" width="1024" height="654" viewBox="0 0 1024 654"><rect x="368.40" y="616.70" width="101.60" height="14.40" fill="#dedede"/></svg>
<span style="left:376.97px;top:617.76px;font-size:9.6px;line-height:12.48px;color:#666;transform:scaleX(0.9650);transform-origin:0 50%;">Revenue by Country</span>
<svg style="left:0;top:0" width="1024" height="654" viewBox="0 0 1024 654"><rect x="108.60" y="630.20" width="46.90" height="1.00" fill="#4f8a5e"/><rect x="470.00" y="618.50" width="1.00" height="12.00" fill="#bdbdbd"/></svg>
<svg style="left:0;top:616px" width="520" height="17" viewBox="0 0 520 17">
<path d="M16.500 5.600L14.200 8.200l2.300 2.600" stroke="#c9c9c9" stroke-width="1" fill="none"/>
<path d="M30 5.600L32.300 8.200l-2.300 2.600" stroke="#c9c9c9" stroke-width="1" fill="none"/>
<circle cx="494.500" cy="8.200" r="6.600" fill="#e4e4e4" stroke="#777" stroke-width="1"/>
<path d="M491 8.200h7M494.500 4.700v7" stroke="#555" stroke-width="1.100"/></svg>
<svg style="left:0;top:0" width="1024" height="654" viewBox="0 0 1024 654"><rect x="676.00" y="617.00" width="335.00" height="14.60" fill="#d3d3d3"/><rect x="680.20" y="618.40" width="11.00" height="10.80" fill="#fff"/><rect x="711.60" y="618.40" width="204.80" height="10.80" fill="#fff"/><rect x="1000.20" y="618.40" width="11.00" height="10.80" fill="#fff"/></svg>
<svg style="left:660px;top:616px" width="364" height="17" viewBox="0 0 364 17">
<path d="M12 5v1.200M12 7.600v1.200M12 10.200v1.200" stroke="#aaa" stroke-width="1"/>
<path d="M27 5.600l-2.400 2.200 2.400 2.200z" fill="#555"/><path d="M344.600 5.600l2.400 2.200-2.400 2.200z" fill="#555"/></svg>
</div>
<div id="statusbar">
<svg style="left:0;top:0" width="1024" height="654" viewBox="0 0 1024 654"><rect x="-6.00" y="632.40" width="1036.00" height="27.60" fill="#f1f1f1"/></svg>
<span style="left:6.30px;top:638.54px;font-size:8.4px;line-height:10.92px;color:#666;transform:scaleX(0.8072);transform-origin:0 50%;">Ready</span>
<svg style="left:0;top:0" width="1024" height="654" viewBox="0 0 1024 654"><rect x="818.00" y="632.40" width="26.20" height="27.60" fill="#d2d2d2"/></svg>
<svg style="left:810px;top:632px" width="214" height="22" viewBox="0 0 214 22">
<g fill="none" stroke="#858585" stroke-width="1">
<rect x="15.200" y="5.600" width="13.600" height="12"/><path d="M15.200 9.600h13.600M15.200 13.600h13.600M19.700 5.600v12M24.300 5.600v12" stroke-width="0.8"/>
<rect x="41.500" y="6" width="11.500" height="11"/><rect x="44.300" y="8.600" width="6" height="5.800" stroke-width="0.8"/>
<rect x="69.500" y="6" width="11.500" height="11"/><path d="M73 6v6.500h4.600V6" stroke-width="0.9"/>
<path d="M96 11.400h74" stroke="#9a9a9a" stroke-width="0.9"/>
<path d="M91 11.400h4.600" stroke="#555" stroke-width="1.200"/>
<path d="M172.400 11.400h5.800M175.300 8.500v5.800" stroke="#555" stroke-width="1.200"/>
<rect x="138.800" y="7.400" width="2.600" height="8" fill="#555" stroke="none"/>
</g></svg>
<span style="left:999.40px;top:638.84px;font-size:8.4px;line-height:10.92px;color:#666;transform:scaleX(0.8564);transform-origin:0 50%;">154%</span>
</div>
</div></body></html>
